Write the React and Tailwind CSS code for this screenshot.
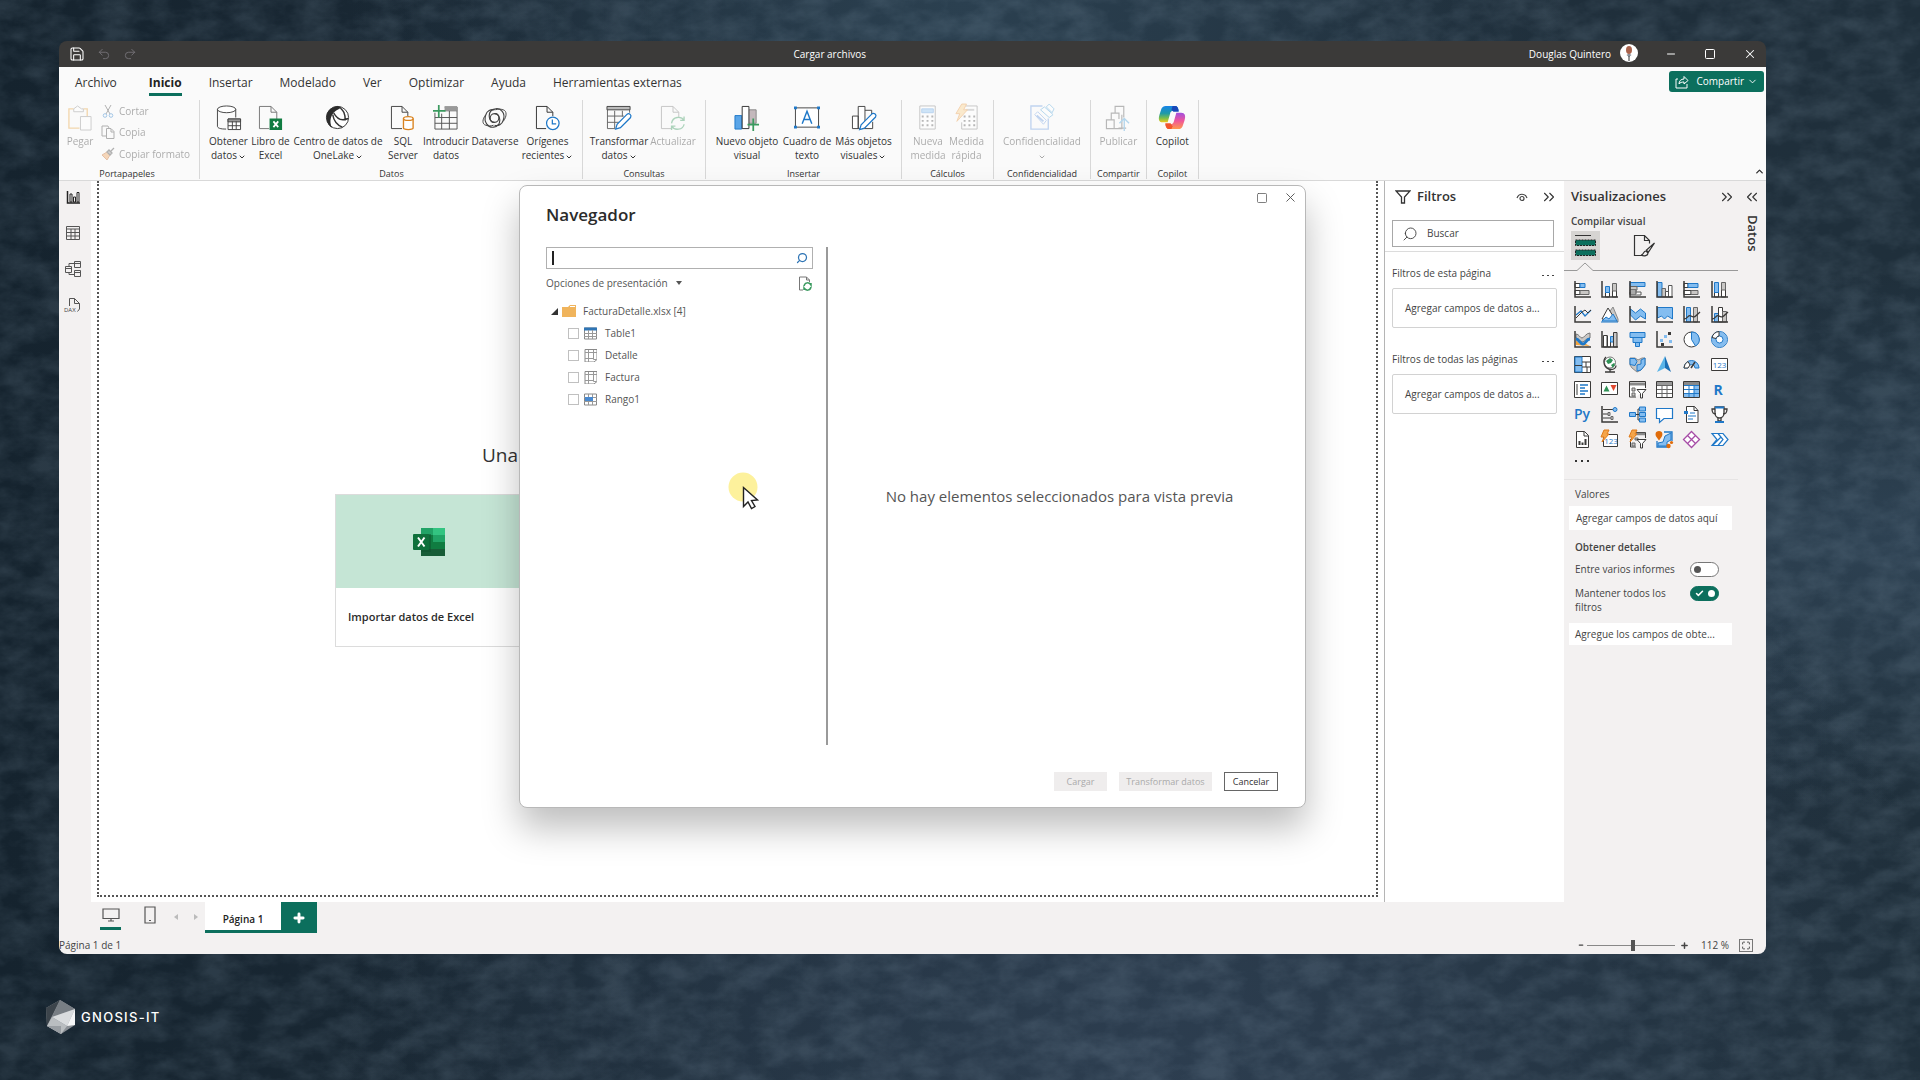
import { Check, ChevronDown, ChevronsLeft, ChevronsRight, ChevronUp, Maximize, Minus, Plus, Redo2, Save, Search, Square, Undo2, X } from 'lucide-react';

const tabs = ['Archivo', 'Inicio', 'Insertar', 'Modelado', 'Ver', 'Optimizar', 'Ayuda', 'Herramientas externas'];

const dark = '#3b3a39';
const blue = '#1f78c8';
const sky = '#84bdf0';
const grey = '#c9c7c5';

/* ---------- Ribbon icons, 26 x 26 ---------- */

const ribbonIcons = {
    paste: (
        <>
            <path d="M7 4H2v20h11M17 4h4v8" stroke="#e8a33d" strokeWidth="1.4" />
            <path d="M7 7V4l4-3 4 3h2v3z" fill="#fff" stroke="#888" />
            <path d="M14 12h11v14H14z" fill="#fff" stroke="#888" />
        </>
    ),
    database: (
        <>
            <ellipse cx="11" cy="4.500" rx="9.500" ry="3.500" fill="#fff" stroke="#444" />
            <path d="M1.500 4.500V22c0 2 3 3 9 3M20.500 4.500V13" stroke="#444" />
            <path d="M12.500 14.500h13v11h-13z" fill="#fff" stroke="#444" />
            <path d="M12.500 14.500h13v3h-13z" fill="#999" stroke="#444" />
            <path d="M12.500 21.500h13M17 17v8M21 17v8" stroke="#444" />
        </>
    ),
    excelPage: (
        <>
            <path d="M1.500 1.500h12l6 6v7M1.500 1.500v23h10" stroke="#777" />
            <path d="M13.500 1.500v6h6" stroke="#777" />
            <path d="M12 14h13v12H12z" fill="#107c41" />
            <path d="M16 17l5 6M21 17l-5 6" stroke="#fff" strokeWidth="1.800" />
        </>
    ),
    oneLake: (
        <>
            <circle cx="13" cy="13" r="11.500" fill="#fff" stroke="#333" />
            <path d="M13 1C6 2 1 7 1.500 14c.5 5 3 8 6 10C4 18 5 8 15 4l2-2z" fill="#2b2b2b" />
            <path d="M8 10c1 6 5 11 10 13M9 8c3 6 8 9 15 6M16 3c3 3 5 5 5 13" stroke="#333" strokeWidth="1.500" />
        </>
    ),
    sql: (
        <>
            <path d="M1.500 1.500h11l6 6v4M1.500 1.500v23h11" stroke="#444" />
            <path d="M12.500 1.500v6h6" stroke="#444" />
            <path d="M14 14v10c0 2 10 2 10 0V14" fill="#fff" stroke="#d9821e" strokeWidth="1.400" />
            <ellipse cx="19" cy="14" rx="5" ry="2" fill="#fff" stroke="#d9821e" strokeWidth="1.400" />
        </>
    ),
    enterData: (
        <>
            <path d="M2 8v17h23V2H12M2 13h23M2 19h23M9 9v16M17 6v19M12 6h13" stroke="#555" />
            <path d="M12 2h13v4H12z" fill="#999" />
            <path d="M6 0v13M0 6h13" stroke="#3a9a5f" strokeWidth="1.800" />
        </>
    ),
    dataverse: (
        <>
            <path d="M13 9c6-1 6 9 0 9-7 0-8-13 1-14 5-1 11 4 8 12-1 4-5 6-9 5" stroke="#444" strokeWidth="1.200" />
            <path d="M13 18c-6 1-6-9 0-9 7 0 8 13-1 14C7 24 1 18 4 10c1-4 5-6 9-5" stroke="#444" strokeWidth="1.200" />
            <path d="M4 10C0 15 0 20 4 21c3 1 5 1 8 0M22 17c4-5 4-11 0-12-3-1-5-1-8 0" stroke="#444" />
        </>
    ),
    recent: (
        <>
            <path d="M1.500 1.500h11l6 6v4M1.500 1.500v23h10" stroke="#333" />
            <path d="M12.500 1.500v6h6" stroke="#333" />
            <circle cx="18.500" cy="19" r="6.500" fill="#fff" stroke={blue} strokeWidth="1.300" />
            <path d="M18 15v4.500h4" stroke={blue} strokeWidth="1.300" />
        </>
    ),
    transform: (
        <>
            <path d="M1.500 5v19.500h8M1.500 11.500h17M1.500 18h12M9 6v18M17 6v6M24.500 5v3" stroke="#666" />
            <path d="M1 1.500h24V5H1z" fill="#bbb" stroke="#444" />
            <path d="M10 25l1.500-5L22 9.500c2-1.500 5 1 3.500 3.500L15 23.500z" fill="#fff" stroke={blue} strokeWidth="1.300" />
        </>
    ),
    refresh: (
        <>
            <path d="M1.500 1.500h12l6 6v5M1.500 1.500v23h10" stroke="#777" />
            <path d="M13.500 1.500v6h6" stroke="#777" />
            <path d="M12 19c1-7 10-8 13-3M25 12v4h-4M25 20c-1 6-10 7-13 2M12 26v-4h4" stroke="#3a9a5f" strokeWidth="1.400" />
        </>
    ),
    newVisual: (
        <>
            <path d="M1 11h7v14H1z" fill="#5aa5e8" stroke={blue} />
            <path d="M15 5h8v14h-8z" fill="#c4b8bc" stroke="#888" />
            <path d="M8.500 1.500h7v23h-7z" fill="#fff" stroke="#333" />
            <path d="M20 14v13M14 20.500h12" stroke="#3a9a5f" strokeWidth="1.800" />
        </>
    ),
    textBox: (
        <>
            <path d="M1.500 3h24v20h-24z" fill="#fff" stroke="#444" />
            <path d="M0 1.500h3v3H0zM24 1.500h3v3h-3zM0 21.500h3v3H0zM24 21.500h3v3h-3z" fill={blue} />
            <path d="M8.500 19.500l5-13 5 13M10 15h7" stroke={blue} strokeWidth="1.500" />
        </>
    ),
    moreVisuals: (
        <>
            <path d="M1.500 11.500h6v13h-6zM7.500 1.500h7v23h-7zM14.500 5.500h7v4M14.500 24.500h8v-7" fill="#fff" stroke="#444" />
            <path d="M9 25.500l1.500-5L22 9c2-1 5 1 3.500 3.500L14 24z" fill="#fff" stroke={blue} strokeWidth="1.300" />
        </>
    ),
    measure: (
        <>
            <path d="M5 1h16v24H5z" fill="#fff" stroke="#777" />
            <path d="M7 4h12v4H7z" fill="#8fc4f5" stroke="#5a9be0" />
            <path d="M7 12h12M7 16.500h12M7 21h12" stroke="#555" strokeWidth="2" strokeDasharray="2 3" />
        </>
    ),
    quickMeasure: (
        <>
            <path d="M12 1h12v24H8v-7" fill="#fff" stroke="#777" />
            <path d="M12 5h9" stroke="#aaa" strokeWidth="2" />
            <path d="M10 12h12M10 16.500h12M10 21h12" stroke="#555" strokeWidth="2" strokeDasharray="2 3" />
            <path d="M8-1h5l-3 6h4L3 17l3-8H2z" fill="#fbd08a" stroke="#e8953d" />
        </>
    ),
    sensitivity: (
        <>
            <path d="M14 1H2v24h18V14" stroke="#6b9be0" strokeWidth="1.400" />
            <path d="M6 10l3-3 9 9-3 4z" fill="#fff" stroke="#6b9be0" />
            <path d="M8 11l7 6" stroke="#6b9be0" strokeWidth="2" />
            <path d="M12 5l4-3 9 8-4 3zM18 2l3-3 5 5-2 4z" fill="#fff" stroke="#4aa0d8" />
        </>
    ),
    publish: (
        <>
            <path d="M1.500 15.500h8v9h-8zM6.500 15V8.500h8v6M10.500 8V1.500h9V13M9.500 24.500h8V10M14 24h8" stroke="#555" strokeWidth="1.200" />
            <path d="M20 27V14M15 19l5-5 5 5" stroke="#4aa0d8" strokeWidth="1.400" />
        </>
    ),
    copilot: (
        <>
            <defs>
                <linearGradient id="cpLeft" x1="0" y1="0" x2="0" y2="1">
                    <stop offset="0" stopColor="#1683e8" />
                    <stop offset=".45" stopColor="#1f9aa8" />
                    <stop offset=".75" stopColor="#7cbf4a" />
                    <stop offset="1" stopColor="#f2c91d" />
                </linearGradient>
                <linearGradient id="cpRight" x1="0" y1="0" x2="0" y2="1">
                    <stop offset="0" stopColor="#a04fe0" />
                    <stop offset=".5" stopColor="#f0569a" />
                    <stop offset="1" stopColor="#ff9a4d" />
                </linearGradient>
            </defs>
            <path d="M7 1h10c2 0 3 2 3.500 5H15c-2 0-3 1-3.500 3L9 18H4c-4 0-5-3-3.500-8L2.500 4C3.200 2 5 1 7 1z" fill="url(#cpLeft)" />
            <path d="M14 1h3c2 0 3 2 3.500 6H15l-2-2z" fill="#1848b8" />
            <path d="M20 25H10c-2 0-3-2-3.500-5H12c2 0 3-1 3.500-3L18 8h5c4 0 5 3 3.500 8l-2 6c-.7 2-2.500 3-4.500 3z" fill="url(#cpRight)" />
            <path d="M13 25h-3c-2 0-3-2-3.500-6H12l2 3z" fill="#f2552c" />
        </>
    ),
};

const ribbonGroups = [
    {
        title: 'Datos',
        pad: 'pl-2 pr-[7px]',
        items: [
            { icon: 'database', lines: ['Obtener', 'datos'], menu: true, width: 'w-[41px]' },
            { icon: 'excelPage', lines: ['Libro de', 'Excel'], width: 'w-[43px]' },
            { icon: 'oneLake', lines: ['Centro de datos de', 'OneLake'], menu: true, width: 'w-[92px]' },
            { icon: 'sql', lines: ['SQL', 'Server'], width: 'w-[38px]' },
            { icon: 'enterData', lines: ['Introducir', 'datos'], width: 'w-12' },
            { icon: 'dataverse', lines: ['Dataverse'], width: 'w-[50px]' },
            { icon: 'recent', lines: ['Orígenes', 'recientes'], menu: true, width: 'w-[55px]' },
        ],
    },
    {
        title: 'Consultas',
        pad: 'px-[7px]',
        items: [
            { icon: 'transform', lines: ['Transformar', 'datos'], menu: true, width: 'w-[58px]' },
            { icon: 'refresh', lines: ['Actualizar'], off: true, width: 'w-[50px]' },
        ],
    },
    {
        title: 'Insertar',
        pad: 'px-[7px]',
        items: [
            { icon: 'newVisual', lines: ['Nuevo objeto', 'visual'], width: 'w-[68px]' },
            { icon: 'textBox', lines: ['Cuadro de', 'texto'], width: 'w-[52px]' },
            { icon: 'moreVisuals', lines: ['Más objetos', 'visuales'], menu: true, width: 'w-[61px]' },
        ],
    },
    {
        title: 'Cálculos',
        pad: 'px-[7px]',
        items: [
            { icon: 'measure', lines: ['Nueva', 'medida'], off: true, width: 'w-[38px]' },
            { icon: 'quickMeasure', lines: ['Medida', 'rápida'], off: true, width: 'w-[39px]' },
        ],
    },
    {
        title: 'Confidencialidad',
        pad: 'px-[7px]',
        items: [{ icon: 'sensitivity', lines: ['Confidencialidad', ''], menu: true, off: true, width: 'w-[82px]' }],
    },
    { title: 'Compartir', pad: 'px-[6px]', items: [{ icon: 'publish', lines: ['Publicar'], off: true, width: 'w-[41px]' }] },
    { title: 'Copilot', pad: 'px-[7px]', items: [{ icon: 'copilot', lines: ['Copilot'], width: 'w-[37px]' }] },
];

/* ---------- Visualization icons, 17 x 17 ---------- */

const Axis = () => <path d="M1 0v16h16" stroke={dark} strokeWidth="1.500" />;

const visuals = [
    ['Barras apiladas', <><path d="M1 2.500h5v4H1zM1 9.500h5v4H1z" fill="#fff" stroke={dark} /><path d="M6 2.500h5v4H6z" fill={sky} stroke={blue} /><path d="M6 9.500h9v4H6z" fill={grey} stroke="#666" /><Axis /></>],
    ['Columnas apiladas', <><path d="M4.500 11.500h4V16h-4zM11.500 8h4v8h-4z" fill="#fff" stroke={dark} /><path d="M4.500 5.500h4v6h-4z" fill={sky} stroke={blue} /><path d="M11.500 2.500h4V10h-4z" fill={grey} stroke="#666" /><Axis /></>],
    ['Barras agrupadas', <><path d="M1 1.500h15v4H1z" fill={sky} stroke={blue} /><path d="M1 5.500h7v3.500H1z" fill={grey} stroke="#666" /><path d="M1 9h6v4H1zM1 11h11v3H1z" fill="#fff" stroke="#555" /><Axis /></>],
    ['Columnas agrupadas', <><path d="M1.500 1.500H6V16H1.500z" fill={sky} stroke={blue} /><path d="M6 7.500h3.500V16H6z" fill={grey} stroke="#666" /><path d="M9.500 10.500h3V16h-3zM12.500 4.500h3.500V16h-3.500z" fill="#fff" stroke="#555" /><Axis /></>],
    ['Barras 100%', <><path d="M1 2.500h4v4H1zM1 9.500h7v4H1z" fill="#fff" stroke={dark} /><path d="M5 2.500h10v4H5z" fill={sky} stroke={blue} /><path d="M8 9.500h7v4H8z" fill={grey} stroke="#666" /><Axis /></>],
    ['Columnas 100%', <><path d="M3.500 11h4v5h-4zM10.500 8h4v8h-4z" fill="#fff" stroke={dark} /><path d="M3.500 1.500h4v10h-4z" fill={sky} stroke={blue} /><path d="M10.500 1.500h4V9h-4z" fill={grey} stroke="#666" /><Axis /></>],
    ['Líneas', <><path d="M2 9l5-4 4 5 6-6" stroke={blue} strokeWidth="1.300" /><path d="M2 12l6-6 3-2 3 3 3-3" stroke={dark} /><Axis /></>],
    ['Áreas', <><path d="M7 8l5-7 5 12v3z" fill={grey} stroke="#888" /><path d="M1 13l6-11 5 8-4 4z" fill="#fff" stroke={dark} /><path d="M1 15l4-4 3 2 4-5 4 7z" fill={sky} stroke={blue} /><path d="M0 16h17" stroke={blue} /></>],
    ['Áreas apiladas', <><path d="M1.500 3l5 4 5-4 5 4v6l-5-3-5 4-5-5z" fill={sky} stroke={blue} /><Axis /></>],
    ['Áreas 100%', <><path d="M1.500 1.500h15V13l-5-3-3 3-3-3-4 2z" fill={sky} stroke={blue} /><Axis /></>],
    ['Líneas y columnas apiladas', <><path d="M3.500 1.500h4V16h-4z" fill={sky} stroke={blue} /><path d="M10.500 1.500h4V16h-4z" fill={grey} stroke="#666" /><path d="M1 13c4 0 4-5 7-3s4 1 9-4" stroke={dark} strokeWidth="1.300" /><Axis /></>],
    ['Líneas y columnas agrupadas', <><path d="M3.500 7.500h4V16h-4z" fill={sky} stroke={blue} /><path d="M7.500 1.500h4V16h-4z" fill="#fff" stroke={dark} /><path d="M11.500 5.500h4V16h-4z" fill={grey} stroke="#666" /><path d="M1 13c4 0 4-5 7-3s4 1 9-4" stroke={dark} strokeWidth="1.300" /><Axis /></>],
    ['Barra de herramientas', <><path d="M2 3c3 0 4 4 6 4s4-5 8-5v5c-4 0-5 4-8 4S5 7 2 7z" fill={grey} stroke="#777" /><path d="M2 14V9l4 4 4-1 6 3z" fill="#f2a33c" /><path d="M2 8c3 0 4 5 7 5s3-5 7-5" stroke={blue} strokeWidth="3" /><Axis /></>],
    ['Cascada', <><path d="M2.500 4.500H6V16H2.500zM9.500 6.500V16h-3V4.500" fill="#fff" stroke={dark} /><path d="M9.500 5.500h3V11h-3z" fill={sky} stroke={blue} /><path d="M12.500 1.500H16V16h-3.500z" fill={grey} stroke={dark} /><Axis /></>],
    ['Embudo', <><path d="M1 1.500h15v5H1z" fill={sky} stroke={blue} /><path d="M4 6.500h9v5H4z" fill={sky} stroke={blue} /><path d="M6.500 11.500h4v4h-4z" fill={sky} stroke={blue} /></>],
    ['Dispersión', <><path d="M4 8h3v3H4zM8 4h3v3H8zM13 9h3v3h-3z" fill={sky} /><path d="M12 1h3v3h-3zM5 12h3v3H5z" fill={dark} /><Axis /></>],
    ['Circular', <><circle cx="8.500" cy="8.500" r="7.500" fill="#fff" stroke={dark} /><path d="M8.500 1a7.500 7.500 0 0 1 4 14l-4-6.500z" fill={sky} stroke={blue} /></>],
    ['Anillos', <><circle cx="8.500" cy="8.500" r="5.500" stroke={sky} strokeWidth="4" /><circle cx="8.500" cy="8.500" r="8" stroke={blue} /><circle cx="8.500" cy="8.500" r="3.500" fill="#fff" stroke={blue} /><path d="M1 6.500C2 3 4 1 8 .500V5C6.500 5 5.500 6 5 7.500z" fill="#fff" stroke={dark} /></>],
    ['Treemap', <><path d="M.5.500h16v16H.5z" fill="#fff" stroke={dark} /><path d="M1 1h7v15H1z" fill={sky} stroke={blue} /><path d="M1 9.500h7M8 6h8M8 11h8M12 6v5M13 11v5" stroke={dark} /></>],
    ['Mapa', <><circle cx="9" cy="6.500" r="5.500" fill="#fff" stroke="#777" /><path d="M5 5l4-3 3 2-2 3-3 1zM10 9l3-2 1 1-2 4z" fill="#2f9155" /><path d="M5 1C1 5 3 13 10 13.500c3 0 5-2 5-4M9 13v3M4 16h10" stroke={dark} strokeWidth="1.300" /></>],
    ['Mapa coroplético', <><path d="M1 2l5 0 3 2 4-2 3 0v7l-4 5-4 2-5-4-2-3z" fill={grey} stroke="#888" /><path d="M1 2.500h5l2 3-2 4-5-1zM8 9l4-1V4l4-2v7l-4 5-4 1z" fill={sky} stroke={blue} /></>],
    ['Azure Map', <><path d="M9 0L1 16l8-4z" fill="#5ab4e8" /><path d="M9 0l6 16-6-4z" fill="#1b6fb5" /></>],
    ['Medidor', <><path d="M1 12a7.500 7.500 0 0 1 15 0h-4a3.500 3.500 0 0 0-7 0z" fill={sky} stroke={blue} /><path d="M1 12a7.500 7.500 0 0 1 4-6.500L7 9l-2 3z" fill="#fff" stroke={dark} /><path d="M8 12l4-6" stroke={dark} strokeWidth="1.500" /></>],
    ['Tarjeta', <><path d="M.5 2.500h16v12H.5z" fill="#fff" stroke={dark} /><text x="8.500" y="11.500" fontSize="8" textAnchor="middle" fill={blue}>123</text></>],
    ['Tarjeta de varias filas', <><path d="M.5.500h16v16H.5z" fill="#fff" stroke={dark} /><path d="M3 3v11" stroke={dark} /><path d="M6 4h8M6 7h5M6 10h8M6 13h5" stroke={blue} strokeWidth="1.500" /></>],
    ['KPI', <><path d="M.5 1.500h16v12H.5z" fill="#fff" stroke={dark} /><path d="M2.500 10.500h6l-3-6z" fill="#2f9155" /><path d="M9.500 4h6l-3 6z" fill="#e0482f" /></>],
    ['Segmentación', <><path d="M7 16H.5V.500h16V7" fill="#fff" stroke={dark} /><path d="M1 3h15" stroke="#888" strokeWidth="3" /><path d="M3 7h3v3H3zM3 12h3v3H3z" fill={grey} stroke="#666" /><path d="M8 8.500h9l-3.500 4V17h-2v-4.500z" fill="#fff" stroke={dark} /></>],
    ['Tabla', <><path d="M.5.500h16v16H.5z" fill="#fff" stroke={dark} /><path d="M1 2.500h15" stroke="#999" strokeWidth="3" /><path d="M1 4.500h15M1 8.500h15M1 12.500h15M6 4v12M11 4v12" stroke="#666" /></>],
    ['Matriz', <><path d="M.5.500h16v16H.5z" fill="#fff" stroke={dark} /><path d="M1 2.500h15" stroke="#888" strokeWidth="3" /><path d="M11 4h5v8h-5zM1 12h15v4H1z" fill={sky} /><path d="M1 4.500h15M1 8.500h15M1 12.500h15M6 4v12M11 4v12" stroke={blue} /></>],
    ['Script de R', <text x="7" y="13.500" fontSize="14" fontWeight="700" textAnchor="middle" fill={blue}>R</text>],
    ['Script de Python', <text x="8" y="13" fontSize="14" fontWeight="600" textAnchor="middle" fill={blue}>Py</text>],
    ['Elementos influyentes', <><path d="M2 3.500h10M2 8h5M2 12h8" stroke={dark} /><circle cx="14" cy="3.500" r="2" fill={sky} stroke={blue} /><path d="M7 6.500h2v3H7zM10 10.500h2v3h-2z" fill={grey} stroke="#666" /><Axis /></>],
    ['Árbol de descomposición', <><path d="M7 8.500h4M9 3v11M9 3h2M9 14h2" stroke={dark} /><path d="M.5 6.500h6v4h-6z" fill={sky} stroke={blue} /><path d="M10.500 1h6v4h-6zM10.500 6.500h6v4h-6zM10.500 12h6v4h-6z" fill={sky} stroke={blue} /></>],
    ['Preguntas y respuestas', <path d="M.5 2.500h16v10H8l-4.500 4v-4h-3z" fill="#fff" stroke={blue} strokeWidth="1.200" />],
    ['Narración inteligente', <><path d="M3.500.500h8l3.500 4v12H3.500z" fill="#fff" stroke={dark} /><path d="M11 .500v4h4" stroke={dark} /><path d="M1 5h4v3H1z" fill={blue} /><path d="M7 7h5M5 10h8M5 13h5" stroke={blue} /></>],
    ['Métricas', <><path d="M4 1h9v6c0 3-2 5-4.500 5S4 10 4 7z" fill="#fff" stroke={dark} strokeWidth="1.300" /><path d="M4 3H1c0 4 1 5 4 5M13 3h3c0 4-1 5-4 5M7 12v3h3v-3" stroke={dark} strokeWidth="1.300" /><path d="M4 16h9M4 1.500h9" stroke={blue} strokeWidth="2" /></>],
    ['Informe paginado', <><path d="M2.500.500h8l4 4v12h-12z" fill="#fff" stroke={dark} /><path d="M10 .500v4.500h4.500" stroke={dark} /><path d="M5.500 14v-4M8.500 14v-2.500M11.500 14V8" stroke={dark} strokeWidth="2" /></>],
    ['Tarjeta nueva', <><path d="M2.500 3.500h14v12h-14z" fill="#fff" stroke={dark} /><text x="10" y="13" fontSize="8" textAnchor="middle" fill={blue}>123</text><path d="M3-1h5L6 3h2L1 11l2-5H0z" fill="#f5a54a" stroke="#e07b1a" /></>],
    ['Segmentación nueva', <><path d="M7 16H1.500V8M7 1.500h9.500V7" stroke={dark} /><path d="M7 3h9" stroke="#888" strokeWidth="2.500" /><path d="M3 12h3v3H3zM6 7h3v2H6z" fill={grey} stroke="#666" /><path d="M8 8.500h9l-3.500 4V17h-2v-4.500z" fill="#fff" stroke={dark} /><path d="M3-1h5L6 3h2L1 11l2-5H0z" fill="#f5a54a" stroke="#e07b1a" /></>],
    ['ArcGIS', <><path d="M1 10v6h10M8 1h8v9" stroke={blue} strokeWidth="1.300" /><path d="M2 15V12l5-1 2-6 6-3v7l-4 2v4z" fill={sky} stroke={blue} /><path d="M3 0c4 0 4 4 2.500 6L3 9.500.500 6C-1 4-1 0 3 0z" fill="#e06c0a" /><circle cx="12.500" cy="15" r="2.200" fill="#e06c0a" /><circle cx="15.500" cy="11.500" r="1.600" fill="#e06c0a" /></>],
    ['Power Apps', <><path d="M8.500.500l8 8-8 8-8-8z" fill="#fff" stroke="#a64ca6" strokeWidth="1.300" /><path d="M4.500 4.500l8 8M12.500 4.500l-8 8" stroke="#a64ca6" strokeWidth="1.300" /></>],
    ['Power Automate', <><path d="M1 2.500h11l5 6-5 6H1l5-6z" fill="#fff" stroke={blue} strokeWidth="1.200" /><path d="M7 2.500l5 6-5 6M2 14l8-8" stroke={blue} strokeWidth="1.200" /></>],
];

function RibbonButton({ item }) {
    return (
        <button
            type="button"
            disabled={item.off}
            className={`flex ${item.width} flex-col items-center gap-[3px] ${item.off ? 'opacity-40' : ''}`}
        >
            <svg viewBox="0 0 27 27" fill="none" className="h-[26px] w-[26px] overflow-visible">
                {ribbonIcons[item.icon]}
            </svg>
            <span className="flex flex-col items-center text-[10px] leading-[14px] whitespace-nowrap">
                {item.lines.map((line, i) => (
                    <span key={i} className="flex h-[14px] items-center gap-px">
                        {line}
                        {item.menu && i === 1 && <ChevronDown className="mt-1 h-2 w-2" strokeWidth={3} />}
                    </span>
                ))}
            </span>
        </button>
    );
}

function TitleBar() {
    return (
        <header className="flex h-[26px] items-center bg-[#3b3a39] text-[10px] text-white">
            <div className="flex flex-1 items-center gap-3 pl-[10px]">
                <button type="button" aria-label="Guardar"><Save className="h-4 w-4" strokeWidth={1.6} /></button>
                <button type="button" aria-label="Deshacer" className="text-[#77757a]"><Undo2 className="h-[14px] w-[14px]" strokeWidth={1.5} /></button>
                <button type="button" aria-label="Rehacer" className="text-[#77757a]"><Redo2 className="h-[14px] w-[14px]" strokeWidth={1.5} /></button>
            </div>
            <h1>Cargar archivos</h1>
            <div className="mr-[9px] flex flex-[1.23] items-center justify-end">
                <span>Douglas Quintero</span>
                <svg viewBox="0 0 18 18" className="ml-[9px] h-[18px] w-[18px] -translate-y-px">
                    <circle cx="9" cy="9" r="9" fill="#fff" />
                    <ellipse cx="9" cy="6" rx="3" ry="4" fill="#a8624c" />
                    <path d="M6.500 11l2.500 2 2.500-2-1.500-1H8z" fill="#8a8f99" />
                    <path d="M9 12v5" stroke="#333" />
                </svg>
                <button type="button" aria-label="Minimizar" className="ml-[27px]"><Minus className="h-3 w-3" strokeWidth={2} /></button>
                <button type="button" aria-label="Maximizar" className="ml-[27px]"><Square className="h-3 w-3" strokeWidth={2} /></button>
                <button type="button" aria-label="Cerrar" className="ml-[27px]"><X className="h-[14px] w-[14px]" strokeWidth={1.8} /></button>
            </div>
        </header>
    );
}

function Clipboard() {
    return (
        <div className="flex w-[141px] flex-col justify-between border-r border-[#d8d8d8]">
            <div className="flex opacity-40">
                <button type="button" disabled className="flex w-[42px] flex-col items-center gap-[3px] pt-[5px] text-[10px] leading-[14px]">
                    <svg viewBox="0 0 27 27" fill="none" className="h-[26px] w-[26px]">{ribbonIcons.paste}</svg>
                    Pegar
                </button>
                <div className="flex flex-col items-start text-[10px] leading-[14px]">
                    <button type="button" disabled className="flex h-[21px] items-center gap-1">
                        <svg viewBox="0 0 14 14" fill="none" className="h-[14px] w-[14px]">
                            <path d="M4 1l5 9M10 1L5 10" stroke="#444" />
                            <circle cx="4" cy="11.500" r="1.800" stroke={blue} />
                            <circle cx="10" cy="11.500" r="1.800" stroke={blue} />
                        </svg>
                        Cortar
                    </button>
                    <button type="button" disabled className="flex h-[22px] items-center gap-1">
                        <svg viewBox="0 0 14 14" fill="none" className="h-[14px] w-[14px]">
                            <path d="M5 11H1V1h6l1 2M5.500 3.500H10l3 3v7H5.500zM10 4v3h3" stroke="#444" />
                        </svg>
                        Copia
                    </button>
                    <button type="button" disabled className="flex h-[21px] items-center gap-1">
                        <svg viewBox="0 0 14 14" fill="none" className="h-[14px] w-[14px]">
                            <path d="M1 8l5-3 3 3-3 5z" fill="#f0a35a" stroke="#c56a2a" />
                            <path d="M6 5l2-2 3 3-2 2zM10 4l3-3" fill="#999" stroke="#444" strokeWidth="1.300" />
                        </svg>
                        Copiar formato
                    </button>
                </div>
            </div>
            <h2 className="pr-1 text-center text-[9px] leading-[10px]">Portapapeles</h2>
        </div>
    );
}

function Ribbon() {
    return (
        <div className="bg-[#fafafa] text-[#333]">
            <div className="flex h-[30px] items-start justify-between">
                <nav className="flex gap-[27px] pl-4 text-[12px]">
                    {tabs.map((tab) => (
                        <button
                            key={tab}
                            type="button"
                            className={`h-[29px] border-b-[3px] pt-[5px] whitespace-nowrap ${tab === 'Inicio' ? 'ml-[5px] border-[#0c6f5d] font-bold text-[#222]' : 'border-transparent'}`}
                        >
                            {tab}
                        </button>
                    ))}
                </nav>
                <button type="button" className="mt-1 mr-[2px] flex h-[21px] items-center rounded-[3px] bg-[#0c6f5d] pr-[6px] pl-[6px] text-[10px] text-white">
                    <svg viewBox="0 0 14 14" fill="none" stroke="#fff" className="mr-[7px] h-[14px] w-[14px]">
                        <path d="M3 4H1v9h11V9M4 9c0-3 2-5 5-5V1.500L13 5.500 9 9V7C7 7 5 7.500 4 9z" />
                    </svg>
                    Compartir
                    <ChevronDown className="ml-[3px] h-[11px] w-[11px]" />
                </button>
            </div>
            <div className="flex h-[84px] border-b border-[#d9d9d9] pt-[3px] pb-px">
                <Clipboard />
                {ribbonGroups.map((group) => (
                    <section key={group.title} className={`flex flex-col justify-between border-r border-[#d8d8d8] ${group.pad}`}>
                        <div className="flex justify-center pt-[5px]">
                            {group.items.map((item) => <RibbonButton key={item.icon} item={item} />)}
                        </div>
                        <h2 className="text-center text-[9px] leading-[10px]">{group.title}</h2>
                    </section>
                ))}
                <button type="button" aria-label="Contraer la cinta" className="mr-px mb-[2px] ml-auto self-end"><ChevronUp className="h-[11px] w-[11px]" strokeWidth={3} /></button>
            </div>
        </div>
    );
}

function ViewRail() {
    const stroke = { fill: 'none', stroke: '#555' };
    return (
        <nav className="flex w-8 flex-col items-start gap-5 bg-[#f3f1f1] pt-2 pl-[6px]">
            <button type="button" aria-label="Vista de informe">
                <svg viewBox="0 0 16 16" {...stroke} className="h-4 w-4">
                    <path d="M2.500 2v12H15" stroke="#222" strokeWidth="1.500" />
                    <path d="M5 5h2v8H5zM8.500 8h2v5h-2zM12 3.500h2V13h-2z" stroke="#222" />
                </svg>
            </button>
            <button type="button" aria-label="Vista de tabla">
                <svg viewBox="0 0 16 16" {...stroke} className="h-4 w-4"><path d="M1.500 1.500h13v13h-13zM1.500 4h13M1.500 7.500h13M1.500 11h13M6 4v10M10 4v10" /></svg>
            </button>
            <button type="button" aria-label="Vista de modelo">
                <svg viewBox="0 0 16 16" {...stroke} className="h-4 w-4"><path d="M.5 5.500h6v6h-6zM.5 7.500h6M9.500.500h6v6h-6zM9.500 2.500h6M9.500 9.500h6v6h-6zM9.500 11.500h6M4 5V2.500h5M4 12v1.500h5.500" /></svg>
            </button>
            <button type="button" aria-label="Vista de consultas DAX">
                <svg viewBox="0 0 16 16" {...stroke} className="h-4 w-4 overflow-visible">
                    <path d="M4.500 9V1.500h5l5 5V12l-2 2.500M9.500 1.500v5h5" />
                    <text x="-1" y="14.500" fontSize="6" stroke="none" fill="#444">DAX</text>
                </svg>
            </button>
        </nav>
    );
}

function Canvas() {
    return (
        <main className="flex-1 bg-white pr-[6px] pb-[5px] pl-[6px]">
            <div className="h-full border-2 border-t-0 border-dotted border-[#555] pl-[236px]">
                <p className="pt-[260px] pl-[147px] text-[19px] leading-7 text-[#333]">Una</p>
                <button type="button" className="mt-[25px] flex w-[188px] flex-col border border-[#dcdcdc] text-left">
                    <span className="flex h-[93px] w-full items-center justify-center bg-[#c5e5d5]">
                        <svg viewBox="0 0 32 28" className="h-7 w-8">
                            <path d="M8 0h12v7H8z" fill="#21a366" />
                            <path d="M20 0h12v7H20z" fill="#33c481" />
                            <path d="M8 7h12v7H8z" fill="#107c41" />
                            <path d="M20 7h12v7H20z" fill="#21a366" />
                            <path d="M8 14h24v7H8z" fill="#107c41" />
                            <path d="M8 21h24v7H8z" fill="#185c37" />
                            <path d="M8 6h10v18H8z" fill="#0b4f2c" opacity=".5" />
                            <rect y="6" width="16" height="16" rx="1" fill="#0f703b" />
                            <path d="M5 9.500l6.500 9M11.500 9.500l-6.500 9" stroke="#fff" strokeWidth="2" />
                        </svg>
                    </span>
                    <span className="py-5 pl-3 text-[11px] leading-[18px] font-semibold text-[#2b2b2b]">Importar datos de Excel</span>
                </button>
            </div>
        </main>
    );
}

function FilterSection({ title, spacing }) {
    return (
        <section className={spacing}>
            <div className="flex items-center justify-between pr-[2px] leading-4">
                <h3>{title}</h3>
                <button type="button" aria-label={`Opciones: ${title}`} className="flex gap-[3px] pt-1 pr-px">
                    <i className="h-px w-[2px] bg-[#444]" />
                    <i className="h-px w-[2px] bg-[#444]" />
                    <i className="h-px w-[2px] bg-[#444]" />
                </button>
            </div>
            <div className="mt-[7px] flex h-10 items-center rounded-[2px] border border-[#d2d2d2] pl-3">Agregar campos de datos a...</div>
        </section>
    );
}

function Filters() {
    return (
        <aside className="w-[180px] border-l border-[#b5b5b5] bg-white text-[10px] text-[#444]">
            <div className="flex h-8 items-center pr-[6px] pl-[10px] text-[#333]">
                <svg viewBox="0 0 16 14" fill="none" stroke="#333" strokeWidth="1.300" className="h-[14px] w-4">
                    <path d="M1 1h14L9.500 7v6h-3V7z" />
                </svg>
                <h2 className="ml-[6px] text-[13px] font-semibold">Filtros</h2>
                <svg viewBox="0 0 12 9" fill="none" stroke="#444" strokeWidth="1.200" className="ml-auto h-[9px] w-3">
                    <path d="M1 5c2-5 8-5 10 0" />
                    <circle cx="6" cy="5.500" r="2" />
                </svg>
                <button type="button" aria-label="Contraer filtros" className="ml-3"><ChevronsRight className="h-[18px] w-[18px]" strokeWidth={1.5} /></button>
            </div>
            <div className="mt-[7px] border-b border-[#dcdcdc] pr-[10px] pb-1 pl-[7px]">
                <label className="flex h-[27px] items-center border border-[#a8a8a8] pl-[9px]">
                    <Search className="h-4 w-4 -scale-x-100" strokeWidth={1.4} />
                    <input type="search" aria-label="Buscar" placeholder="Buscar" className="ml-[9px] w-24 text-[10px] outline-none placeholder:text-[#444]" />
                </label>
            </div>
            <div className="pr-[7px] pl-[7px]">
                <FilterSection title="Filtros de esta página" spacing="mt-[13px]" />
                <FilterSection title="Filtros de todas las páginas" spacing="mt-[23px]" />
            </div>
        </aside>
    );
}

function Toggle({ label, on }) {
    return (
        <label className="flex items-start justify-between pr-[19px] pl-[11px] leading-[14px]">
            <span className="w-[106px]">{label}</span>
            <span className="relative flex">
                <input
                    type="checkbox"
                    role="switch"
                    defaultChecked={on}
                    className="h-[15px] w-[29px] appearance-none rounded-full border border-[#777] bg-white checked:border-[#0c6f5d] checked:bg-[#0c6f5d]"
                />
                <span className={`absolute top-1 h-[7px] w-[7px] rounded-full ${on ? 'right-1 bg-white' : 'left-1 bg-[#555]'}`} />
                {on && <Check className="absolute top-[3px] left-[5px] h-[9px] w-[9px] text-white" strokeWidth={4} />}
            </span>
        </label>
    );
}

function Visualizations() {
    return (
        <aside className="w-[174px] bg-[#f3f1f1] text-[10px] text-[#444]">
            <div className="flex h-8 items-center justify-between pr-[2px] pl-[7px] text-[#333]">
                <h2 className="text-[13px] font-semibold">Visualizaciones</h2>
                <button type="button" aria-label="Contraer visualizaciones"><ChevronsRight className="h-[18px] w-[18px]" strokeWidth={1.5} /></button>
            </div>
            <h3 className="pl-[7px] leading-4 font-semibold">Compilar visual</h3>
            <div className="mt-[2px] flex h-[29px] gap-[33px] pl-[7px]">
                <button type="button" aria-label="Compilar" className="flex w-[29px] items-center justify-center bg-[#d6d4d2]">
                    <svg viewBox="0 0 23 23" className="h-[23px] w-[23px]">
                        <path d="M1 1.500h16" stroke="#333" />
                        <path d="M1.500 6h20v5.500h-20zM1.500 16h20v5.500h-20z" fill="#0c6f5d" stroke="#222" strokeDasharray="2 1" />
                    </svg>
                </button>
                <button type="button" aria-label="Formato">
                    <svg viewBox="0 0 23 23" fill="none" stroke="#333" strokeWidth="1.200" className="h-[23px] w-[23px]">
                        <path d="M10 21.500H1.500v-20h10l5 5v3M11.500 1.500v5h5" />
                        <path d="M21.500 9l-8 7 2 2zM13 17c-3 0-2 4-5 4 3 1.500 7 1 7-2z" />
                    </svg>
                </button>
            </div>
            <div className="mt-[2px] flex h-[9px] items-end">
                <span className="w-[13px] border-b border-[#999]" />
                <svg viewBox="0 0 16 9" fill="none" stroke="#999" className="h-[9px] w-4"><path d="M0 8.500L8 1l8 7.500" /></svg>
                <span className="flex-1 border-b border-[#999]" />
            </div>
            <div className="mt-[6px] mr-[5px] ml-[5px] grid auto-rows-[25px] grid-cols-6">
                {visuals.map(([name, drawing]) => (
                    <button key={name} type="button" aria-label={name} className="flex items-center justify-center">
                        <svg viewBox="0 0 17 17" fill="none" className="h-[17px] w-[17px] overflow-visible">{drawing}</svg>
                    </button>
                ))}
            </div>
            <button type="button" aria-label="Más objetos visuales" className="ml-[11px] flex h-[18px] items-center gap-1">
                <i className="h-[2px] w-[2px] bg-[#333]" />
                <i className="h-[2px] w-[2px] bg-[#333]" />
                <i className="h-[2px] w-[2px] bg-[#333]" />
            </button>
            <h3 className="mt-[9px] border-t border-[#e6e4e4] pt-[6px] pl-[11px] leading-4">Valores</h3>
            <div className="mt-1 mr-[6px] ml-[5px] flex h-6 items-center bg-white pl-[7px] whitespace-nowrap">Agregar campos de datos aquí</div>
            <h3 className="mt-[9px] mb-[7px] pl-[11px] leading-4 font-semibold">Obtener detalles</h3>
            <Toggle label="Entre varios informes" />
            <div className="mt-[9px]">
                <Toggle label="Mantener todos los filtros" on />
            </div>
            <div className="mt-[9px] mr-[6px] ml-[5px] flex h-[22px] items-center bg-white pl-[6px] whitespace-nowrap">Agregue los campos de obte...</div>
        </aside>
    );
}

function BottomBar() {
    return (
        <footer className="bg-[#f3f1f1] text-[#444]">
            <div className="flex h-8 items-start pl-[41px]">
                <button type="button" aria-label="Diseño de escritorio" className="flex h-7 w-[21px] justify-center border-b-[3px] border-[#0c6f5d] pt-[6px]">
                    <svg viewBox="0 0 18 14" fill="none" stroke="#555" strokeWidth="1.200" className="h-[14px] w-[18px]"><path d="M1 1h16v9.500H1zM9 10.500V13M6 13h6" /></svg>
                </button>
                <button type="button" aria-label="Diseño móvil" className="ml-[23px] pt-1">
                    <svg viewBox="0 0 12 18" fill="none" stroke="#555" strokeWidth="1.200" className="h-[18px] w-3"><path d="M1 1h10v16H1zM5 14.500h2" /></svg>
                </button>
                <button type="button" aria-label="Página anterior" className="ml-[18px] pt-3">
                    <svg viewBox="0 0 4 6" className="h-[6px] w-1"><path d="M4 0v6L0 3z" fill="#bbb" /></svg>
                </button>
                <button type="button" aria-label="Página siguiente" className="ml-4 pt-3">
                    <svg viewBox="0 0 4 6" className="h-[6px] w-1"><path d="M0 0v6l4-3z" fill="#bbb" /></svg>
                </button>
                <button type="button" className="ml-[7px] h-[31px] w-[76px] border-b-[3px] border-[#0c6f5d] bg-white pt-[6px] text-[10px] font-semibold text-[#222]">Página 1</button>
                <button type="button" aria-label="Nueva página" className="flex h-[31px] w-9 items-center justify-center bg-[#0c6f5d] text-white"><Plus className="h-[14px] w-[14px]" strokeWidth={5} /></button>
            </div>
            <div className="flex h-5 items-center pt-[2px] text-[10px]">
                <span>Página 1 de 1</span>
                <div className="mr-[13px] ml-auto flex items-center">
                    <Minus className="h-[6px] w-[6px]" strokeWidth={5} />
                    <input
                        type="range"
                        aria-label="Zoom"
                        defaultValue="52"
                        className="mr-[5px] ml-[3px] h-3 w-[88px] appearance-none bg-[linear-gradient(#888,#888)] bg-[length:100%_1px] bg-center bg-no-repeat [&::-webkit-slider-thumb]:h-[11px] [&::-webkit-slider-thumb]:w-1 [&::-webkit-slider-thumb]:appearance-none [&::-webkit-slider-thumb]:bg-[#555]"
                    />
                    <Plus className="h-[9px] w-[9px]" strokeWidth={4} />
                    <span className="ml-3">112 %</span>
                    <button type="button" aria-label="Ajustar a la página" className="ml-[10px] border border-[#777] p-px"><Maximize className="h-[9px] w-[10px]" strokeWidth={2.5} /></button>
                </div>
            </div>
        </footer>
    );
}

const sheetIcon = (
    <>
        <path d="M1 .500h12v10l-3 2.500H1z" fill="#fff" stroke="#888" />
        <path d="M1 3.500h12M1 9.500h9M4.500 1v12M9.500 1v9.500h3" stroke="#999" />
    </>
);

const entries = [
    ['Table1', <><path d="M.5 1h12v11H.5z" fill="#fff" stroke="#888" /><path d="M0 .500h13v3H0z" fill="#2f75b5" /><path d="M0 6.500h13M0 9.500h13M4.500 3v9M8.500 3v9" stroke="#999" /></>],
    ['Detalle', sheetIcon],
    ['Factura', sheetIcon],
    ['Rango1', <><path d="M.5 1h12v11H.5z" fill="#fff" stroke="#888" /><path d="M0 4.500h13M0 8.500h13M4.500 1v11M8.500 1v11" stroke="#999" /><path d="M1 4h8v4H1z" fill="#4a8ad0" /></>],
];

function Navigator() {
    return (
        <section
            role="dialog"
            aria-labelledby="nav-title"
            className="relative w-[787px] rounded-[8px] border border-[#b8b8b8] bg-white text-[#555] shadow-[0_20px_36px_rgba(0,0,0,0.26)]"
        >
            <header className="flex items-start justify-between pr-[7px] pl-[26px]">
                <h2 id="nav-title" className="pt-[17px] text-[17px] leading-6 font-semibold text-[#2b2b2b]">Navegador</h2>
                <div className="flex gap-[15px] pt-1">
                    <button type="button" aria-label="Maximizar"><Square className="h-3 w-3" strokeWidth={1.5} /></button>
                    <button type="button" aria-label="Cerrar"><X className="h-[15px] w-[15px]" strokeWidth={1.5} /></button>
                </div>
            </header>
            <div className="mt-5 flex h-[498px] pr-[14px] pl-[26px]">
                <div className="mr-[13px] w-[267px] text-[10px]">
                    <label className="flex h-[22px] items-center border border-[#b0b0b0] pr-1 pl-[5px]">
                        <span className="h-[14px] w-[2px] bg-[#222]" />
                        <input type="text" aria-label="Buscar en el archivo" className="min-w-0 flex-1 outline-none" />
                        <Search className="h-3 w-3 -scale-x-100 text-[#2f75b5]" strokeWidth={2.5} />
                    </label>
                    <div className="flex h-7 items-center justify-between">
                        <button type="button" aria-haspopup="menu" className="flex items-center gap-2">
                            Opciones de presentación
                            <svg viewBox="0 0 6 4" className="h-1 w-[6px]"><path d="M0 0h6L3 4z" fill="#555" /></svg>
                        </button>
                        <button type="button" aria-label="Actualizar" className="pr-px">
                            <svg viewBox="0 0 14 15" fill="none" className="h-[15px] w-[14px]">
                                <path d="M5 14H1.500V1h7l3 3v2M8.500 1v3h3" stroke="#777" />
                                <path d="M6 10c1-4 5-4 7-1V7M13 11c-1 4-5 4-7 1v2" stroke="#3a9a5f" strokeWidth="1.500" />
                            </svg>
                        </button>
                    </div>
                    <div className="mt-[3px] flex h-[22px] items-center pl-[5px]">
                        <svg viewBox="0 0 7 7" className="h-[7px] w-[7px]"><path d="M7 0v7H0z" fill="#333" /></svg>
                        <svg viewBox="0 0 14 12" className="ml-1 h-3 w-[14px]">
                            <path d="M0 2h6l2-2h6v12H0z" fill="#f0b45c" />
                            <path d="M8 1.500h5" stroke="#fff" />
                        </svg>
                        <span className="ml-[7px]">FacturaDetalle.xlsx [4]</span>
                    </div>
                    <ul>
                        {entries.map(([name, drawing]) => (
                            <li key={name}>
                                <label className="flex h-[22px] items-center pl-[22px]">
                                    <input type="checkbox" className="h-[11px] w-[11px] appearance-none border border-[#c0c0c0] bg-white" />
                                    <svg viewBox="0 0 13 13" fill="none" className="mr-2 ml-[5px] h-[13px] w-[13px]">{drawing}</svg>
                                    {name}
                                </label>
                            </li>
                        ))}
                    </ul>
                </div>
                <div className="flex flex-1 items-center justify-center border-l-2 border-[#9a9a9a] text-[15px]">
                    No hay elementos seleccionados para vista previa
                </div>
            </div>
            <footer className="mt-[27px] flex justify-end gap-3 pr-[27px] pb-4 text-[9px]">
                <button type="button" disabled className="h-[19px] w-[53px] bg-[#efeded] text-[#aaa]">Cargar</button>
                <button type="button" disabled className="h-[19px] w-[93px] bg-[#efeded] text-[#aaa]">Transformar datos</button>
                <button type="button" className="h-[19px] w-[54px] border border-[#666] text-[#333]">Cancelar</button>
            </footer>
            <svg viewBox="0 0 32 38" className="absolute top-[286px] left-[208px] h-[38px] w-8">
                <circle cx="15" cy="15" r="14.500" fill="#fdf19c" />
                <path d="M15.500 15.500v19l4.500-4.500 3.500 6.500 3.500-2-3.500-6 6-.500z" fill="#fff" stroke="#222" strokeWidth="1.400" />
            </svg>
        </section>
    );
}

function Brand() {
    return (
        <div className="relative flex h-[126px] items-start pt-[46px] pl-[46px]">
            <svg viewBox="0 0 30 34" className="h-[34px] w-[30px]">
                <path d="M14 0l15 9v16l-14 9L1 26 0 8z" fill="#8b9096" />
                <path d="M14 0L0 8l1 18z" fill="#3c444b" />
                <path d="M14 0l15 9-23 8z" fill="#787e84" />
                <path d="M29 9L6 17l15 9z" fill="#d9dcde" />
                <path d="M29 9v16l-8 1z" fill="#f4f5f6" />
                <path d="M6 17L1 26l14 8 6-8z" fill="#b9bdc0" />
                <path d="M1 26l14 8v-8z" fill="#989da2" />
            </svg>
            <span className="ml-[5px] font-['Inter',sans-serif] text-[13px] leading-[34px] font-medium tracking-widest text-white">GNOSIS-IT</span>
        </div>
    );
}

/* Faint scratched slate behind the window */
function Backdrop() {
    return (
        <svg aria-hidden="true" className="absolute inset-0 h-full w-full opacity-15">
            <filter id="slate" x="0" y="0" width="100%" height="100%">
                <feTurbulence type="fractalNoise" baseFrequency="0.03 0.05" numOctaves="5" seed="4" />
                <feColorMatrix values="0 0 0 0 0.35  0 0 0 0 0.47  0 0 0 0 0.58  2 0 0 0 -0.6" />
            </filter>
            <rect width="100%" height="100%" filter="url(#slate)" />
        </svg>
    );
}

export default function App() {
    return (
        <div className="relative flex h-screen flex-col overflow-hidden bg-[#1f2e3b] bg-[radial-gradient(ellipse_at_50%_0%,#2b4050_0%,transparent_45%),radial-gradient(ellipse_at_60%_100%,#2d3e50_0%,transparent_50%),radial-gradient(ellipse_at_100%_50%,#2e4253_0%,transparent_35%),linear-gradient(90deg,#15232e,#1f2e3b_50%,#1f2f3b)] pt-[41px] font-['Open_Sans','Noto_Sans',sans-serif]">
            <Backdrop />
            <div className="relative mr-[154px] ml-[59px] flex min-h-0 flex-1 flex-col overflow-hidden rounded-[8px]">
                <TitleBar />
                <Ribbon />
                <div className="flex min-h-0 flex-1">
                    <ViewRail />
                    <Canvas />
                    <Filters />
                    <Visualizations />
                    <aside className="flex w-7 flex-col items-center bg-[#f3f1f1] text-[#333]">
                        <button type="button" aria-label="Expandir datos" className="flex h-8 items-center"><ChevronsLeft className="h-[18px] w-[18px]" strokeWidth={1.5} /></button>
                        <h2 className="mt-[2px] text-[13px] font-semibold [writing-mode:vertical-rl]">Datos</h2>
                    </aside>
                </div>
                <BottomBar />
                <div className="absolute inset-x-0 top-[144px] flex justify-center">
                    <Navigator />
                </div>
            </div>
            <Brand />
        </div>
    );
}
